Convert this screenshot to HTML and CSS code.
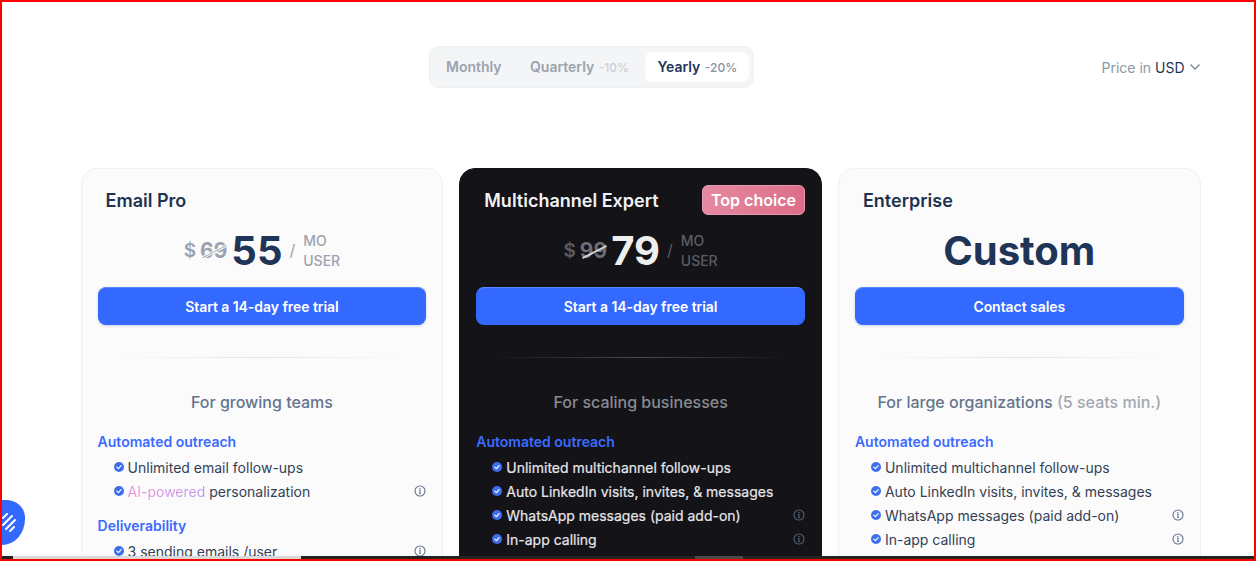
FILE: index.html
```html
<!DOCTYPE html>
<html lang="en">
<head>
  <meta charset="UTF-8">
  <meta name="viewport" content="width=device-width, initial-scale=1.0">
  <title>Pricing</title>
  <link rel="stylesheet" href="styles.css">
</head>
<body>
  <svg class="icon-defs" width="0" height="0">
    <symbol id="check" viewBox="0 0 12 12">
      <circle cx="6" cy="6" r="6" fill="#3f6df0"/>
      <path d="M3.4 6.2l1.9 1.7 3.3-3.5" fill="none" stroke="#fff" stroke-width="1.4" stroke-linecap="round" stroke-linejoin="round"/>
    </symbol>
    <symbol id="info" viewBox="0 0 12 12">
      <circle cx="6" cy="6" r="5" fill="none" stroke="currentColor" stroke-width="1.1"/>
      <path d="M5.2 5.5H6v3M5.1 8.5h1.8" fill="none" stroke="currentColor" stroke-width="1.1"/>
      <circle cx="5.9" cy="3.7" r=".8" fill="currentColor"/>
    </symbol>
  </svg>

  <div class="frame">
    <!-- Billing period -->
    <div class="toolbar">
      <div class="period">
        <span class="period-item">Monthly</span>
        <span class="period-item">Quarterly <small>-10%</small></span>
        <span class="period-item active">Yearly <small>-20%</small></span>
      </div>
      <div class="currency">
        Price in <b>USD</b>
        <svg width="12" height="8" viewBox="0 0 12 8"><path d="M1.5 1.5L6 6l4.5-4.5" fill="none" stroke="#7b8794" stroke-width="1.3"/></svg>
      </div>
    </div>

    <!-- Plans -->
    <div class="plans">
      <section class="plan">
        <div class="plan-head"><h3>Email Pro</h3></div>
        <div class="price">
          <span class="dollar">$</span><span class="old">69</span><span class="amount">55</span><span class="slash">/</span>
          <span class="unit">MO<br>USER</span>
        </div>
        <button class="cta">Start a 14-day free trial</button>
        <div class="divider"></div>
        <p class="tagline">For growing teams</p>
        <h4>Automated outreach</h4>
        <ul>
          <li><svg class="check"><use href="#check"/></svg>Unlimited email follow-ups</li>
          <li><svg class="check"><use href="#check"/></svg><span><span class="ai">AI-powered</span> personalization</span><svg class="info"><use href="#info"/></svg></li>
        </ul>
        <h4>Deliverability</h4>
        <ul>
          <li><svg class="check"><use href="#check"/></svg>3 sending emails /user<svg class="info"><use href="#info"/></svg></li>
        </ul>
      </section>

      <section class="plan dark">
        <div class="plan-head"><h3>Multichannel Expert</h3><span class="badge">Top choice</span></div>
        <div class="price">
          <span class="dollar">$</span><span class="old">99</span><span class="amount">79</span><span class="slash">/</span>
          <span class="unit">MO<br>USER</span>
        </div>
        <button class="cta">Start a 14-day free trial</button>
        <div class="divider"></div>
        <p class="tagline">For scaling businesses</p>
        <h4>Automated outreach</h4>
        <ul>
          <li><svg class="check"><use href="#check"/></svg>Unlimited multichannel follow-ups</li>
          <li><svg class="check"><use href="#check"/></svg>Auto LinkedIn visits, invites, &amp; messages</li>
          <li><svg class="check"><use href="#check"/></svg>WhatsApp messages (paid add-on)<svg class="info"><use href="#info"/></svg></li>
          <li><svg class="check"><use href="#check"/></svg>In-app calling<svg class="info"><use href="#info"/></svg></li>
        </ul>
      </section>

      <section class="plan">
        <div class="plan-head"><h3>Enterprise</h3></div>
        <div class="price custom">Custom</div>
        <button class="cta">Contact sales</button>
        <div class="divider"></div>
        <p class="tagline">For large organizations <span class="muted">(5 seats min.)</span></p>
        <h4>Automated outreach</h4>
        <ul>
          <li><svg class="check"><use href="#check"/></svg>Unlimited multichannel follow-ups</li>
          <li><svg class="check"><use href="#check"/></svg>Auto LinkedIn visits, invites, &amp; messages</li>
          <li><svg class="check"><use href="#check"/></svg>WhatsApp messages (paid add-on)<svg class="info"><use href="#info"/></svg></li>
          <li><svg class="check"><use href="#check"/></svg>In-app calling<svg class="info"><use href="#info"/></svg></li>
        </ul>
      </section>
    </div>

    <!-- Chat widget -->
    <div class="widget">
      <svg width="20" height="20" viewBox="0 0 20 20"><path d="M1 5l4-4M1 12l9-9M4 16l9-9M8 18l4-4" stroke="#fff" stroke-width="2" stroke-linecap="round" fill="none"/></svg>
    </div>

    <!-- Scrollbar -->
    <div class="scrollbar">
      <div class="thumb-light"></div>
      <div class="thumb-dark"></div>
    </div>
  </div>
</body>
</html>
```

FILE: styles.css
```css
* {
    margin: 0;
    padding: 0;
    box-sizing: border-box;
}

body {
    font-family: Inter, "Liberation Sans", sans-serif;
    background-color: #fff;
    overflow: hidden;
}

.icon-defs {
    display: block;
    height: 0;
}

.frame {
    position: relative;
    height: 561px;
    border: 2px solid #f00;
    overflow: hidden;
    padding: 44px 53.4px 0 78.6px;
}

/* Top bar */
.toolbar {
    display: flex;
    align-items: center;
    justify-content: space-between;
    padding-left: 348.4px;
}

.period {
    display: flex;
    gap: 4.5px;
    height: 42px;
    padding: 5px 4px;
    background-color: #f4f5f6;
    border: 1px solid #eff0f2;
    border-radius: 10px;
}

.period-item {
    padding: 0 12px;
    font-size: 14px;
    font-weight: 600;
    line-height: 30px;
    color: #9ca3af;
    border-radius: 7px;
}

.period-item small {
    font-size: 12px;
    font-weight: 500;
    color: #cbd0d6;
    margin-left: 1px;
}

.period-item.active {
    background-color: #fff;
    color: #1f3557;
}

.period-item.active small {
    color: #8592a3;
}

.currency {
    display: flex;
    align-items: center;
    gap: 4px;
    font-size: 14px;
    color: #8c98a6;
}

.currency b {
    font-weight: 400;
    color: #1f3557;
}

/* Plan cards */
.plans {
    display: grid;
    grid-template-columns: repeat(3, 1fr);
    gap: 16px;
    margin-top: 80px;
}

.plan {
    height: 500px;
    padding: 16px;
    background-color: #fbfbfc;
    border: 1px solid #eff0f2;
    border-radius: 16px;
    color: #334155;
}

.plan.dark {
    background-color: #131318;
    border-color: #131318;
    color: #e6e6e9;
}

.plan-head {
    display: flex;
    align-items: center;
    justify-content: space-between;
    height: 30px;
    padding-left: 8px;
}

.plan-head h3 {
    font-size: 18px;
    font-weight: 600;
    color: #1e3350;
}

.dark .plan-head h3 {
    color: #f1f2f4;
}

.badge {
    padding: 0 8px;
    font-size: 16px;
    font-weight: 600;
    line-height: 28px;
    color: #fff;
    background: linear-gradient(100deg, #e58aa2, #dd6c88);
    border: 1px solid #ea9ab0;
    border-radius: 6px;
}

.price {
    display: flex;
    align-items: center;
    justify-content: center;
    height: 60px;
    margin: 5px 0 7px;
    color: #9ca3af;
}

.dollar {
    font-size: 19px;
    font-weight: 600;
    margin-right: 4px;
}

.old {
    position: relative;
    font-size: 21px;
    font-weight: 700;
}

/* slanted strike over the old price */
.old::after {
    content: "";
    position: absolute;
    left: 1px;
    right: -1px;
    top: 50%;
    height: 1px;
    margin-top: 1px;
    background-color: #b9bec6;
    box-shadow: 0 1px 0 #fbfbfc, 0 -1px 0 #fbfbfc;
    transform: rotate(-27deg);
}

.amount {
    margin: 0 7px 0 4px;
    font-size: 40px;
    font-weight: 700;
    color: #1f3557;
}

.slash {
    font-size: 16px;
    margin-right: 8px;
}

.unit {
    margin-top: 2px;
    font-size: 14px;
    font-weight: 500;
    line-height: 20px;
}

.custom {
    font-size: 40px;
    font-weight: 700;
    color: #1f3557;
}

.dark .dollar,
.dark .old,
.dark .slash,
.dark .unit {
    color: #5b5d64;
}

.dark .old {
    color: #6c6e74;
}

.dark .old::after {
    background-color: #d0d0d2;
    box-shadow: none;
    height: 2px;
}

.dark .amount {
    color: #eeeeee;
}

.cta {
    display: block;
    width: 100%;
    height: 38px;
    font-family: inherit;
    font-size: 14px;
    font-weight: 600;
    letter-spacing: -0.05px;
    color: #fff;
    background-color: #3369ff;
    border: 1px solid #3369ff;
    border-top-color: #5a86ff;
    border-radius: 8px;
    box-shadow: 0 1px 3px rgba(30, 50, 90, 0.2);
}

.divider {
    height: 1px;
    margin: 32px 16px 0;
    background: linear-gradient(90deg, transparent, #e2e4e8 50%, transparent);
}

.dark .divider {
    background: linear-gradient(90deg, transparent, #4a4a50 50%, transparent);
}

.tagline {
    margin: 34px 0 20px;
    font-size: 16px;
    font-weight: 500;
    line-height: 20px;
    text-align: center;
    color: #64748b;
}

.dark .tagline {
    color: #8a8b90;
}

.muted {
    color: #a3a8b0;
}

h4 {
    margin-top: 13px;
    font-size: 14px;
    font-weight: 600;
    line-height: 20px;
    color: #3b6bff;
}

ul {
    list-style: none;
    margin-top: 3px;
    padding-left: 16px;
}

li {
    display: flex;
    align-items: center;
    height: 24px;
    font-size: 14px;
    white-space: nowrap;
}

.dark li {
    -webkit-text-stroke: 0.2px #e6e6e9;
}

.check {
    flex: none;
    width: 10px;
    height: 10px;
    margin-right: 4px;
}

.info {
    flex: none;
    width: 12px;
    height: 12px;
    margin-left: auto;
    color: #64748b;
}

.dark .info {
    color: #556070;
}

.ai {
    background: linear-gradient(90deg, #ec93d5, #bb9bf0);
    -webkit-background-clip: text;
    background-clip: text;
    color: transparent;
}

/* Overlays */
.widget {
    position: absolute;
    left: 0;
    bottom: 14px;
    display: flex;
    align-items: center;
    width: 23px;
    height: 45px;
    background-color: #3369ff;
    border-radius: 0 20px 24px 0 / 0 18px 27px 0;
}

.scrollbar {
    position: absolute;
    left: 0;
    right: 0;
    bottom: 0;
    height: 3px;
    background-color: #232323;
}

.thumb-light {
    position: absolute;
    left: 11px;
    width: 288px;
    top: 0;
    height: 3px;
    background-color: #d9d9d9;
}

.thumb-dark {
    position: absolute;
    left: 693px;
    width: 48px;
    top: 0;
    height: 3px;
    background-color: #4a4a4a;
}
```
